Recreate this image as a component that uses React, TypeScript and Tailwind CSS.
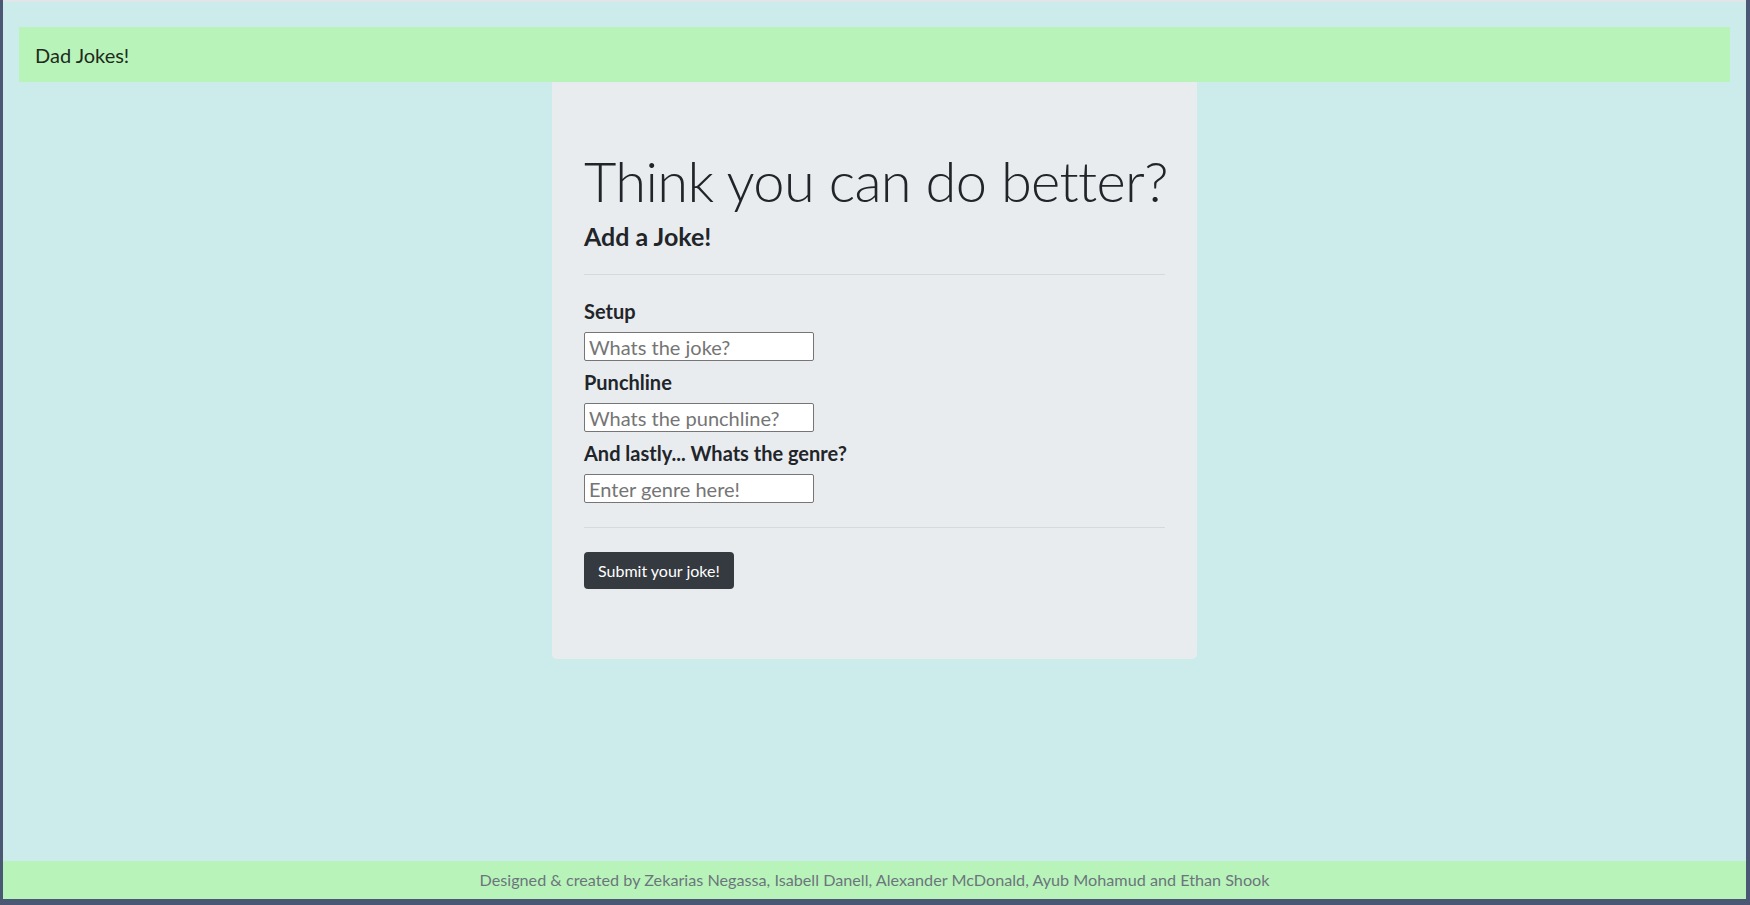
import React, { useState } from 'react';

const font = { fontFamily: 'Lato, "Open Sans", sans-serif' };

function Field({ label, placeholder, value, onChange }: { label: string; placeholder: string; value: string; onChange: (v: string) => void }) {
  return (
    <div className="flex flex-col items-start">
      <label className="text-[20px] font-bold leading-[24px] text-[#212529]">{label}</label>
      <input
        type="text"
        value={value}
        onChange={(e) => onChange(e.target.value)}
        placeholder={placeholder}
        className="mt-[9px] w-[230px] h-[29px] px-[4px] text-[20px] bg-white border border-[#767676] rounded-[2px] placeholder:text-[#757575] focus:outline-none"
      />
    </div>
  );
}

export default function App() {
  const [setup, setSetup] = useState('');
  const [punchline, setPunchline] = useState('');
  const [genre, setGenre] = useState('');

  return (
    <div className="h-[905px] w-full bg-[#4b5873] flex flex-col" style={font}>
      <div className="ml-[3px] mr-[4px] h-[899px] flex flex-col bg-[#cbeceb] border-t-2 border-[#e2e5e8]">
        <nav className="mt-[25px] mx-[16px] h-[55px] bg-[#b8f4b9] flex items-center px-[16px]">
          <span className="text-[20px] text-[#1f2a20]">Dad Jokes!</span>
        </nav>

        <main className="flex-1 flex justify-center">
          <div className="w-[645px] h-[577px] bg-[#e9ecef] rounded-b-[5px] px-[32px] pt-[65px]">
            <h1 className="text-[56px] font-light leading-[67px] tracking-[-0.65px] text-[#212529] whitespace-nowrap">
              Think you can do better?
            </h1>
            <h4 className="mt-[7px] text-[25px] font-bold leading-[30px] text-[#212529]">Add a Joke!</h4>
            <hr className="mt-[23px] mb-[24px] border-t border-[#d6d9dc]" />
            <div className="flex flex-col gap-[9px]">
              <Field label="Setup" placeholder="Whats the joke?" value={setup} onChange={setSetup} />
              <Field label="Punchline" placeholder="Whats the punchline?" value={punchline} onChange={setPunchline} />
              <Field label="And lastly... Whats the genre?" placeholder="Enter genre here!" value={genre} onChange={setGenre} />
            </div>
            <hr className="mt-[24px] mb-[24px] border-t border-[#d6d9dc]" />
            <button className="h-[37px] px-[14px] text-[16px] text-white bg-[#343a40] rounded-[4px]">
              Submit your joke!
            </button>
          </div>
        </main>

        <footer className="h-[38px] bg-[#b8f4b9] flex items-center justify-center">
          <span className="text-[16.2px] text-[#6c757d]">
            Designed &amp; created by Zekarias Negassa, Isabell Danell, Alexander McDonald, Ayub Mohamud and Ethan Shook
          </span>
        </footer>
      </div>
    </div>
  );
}
